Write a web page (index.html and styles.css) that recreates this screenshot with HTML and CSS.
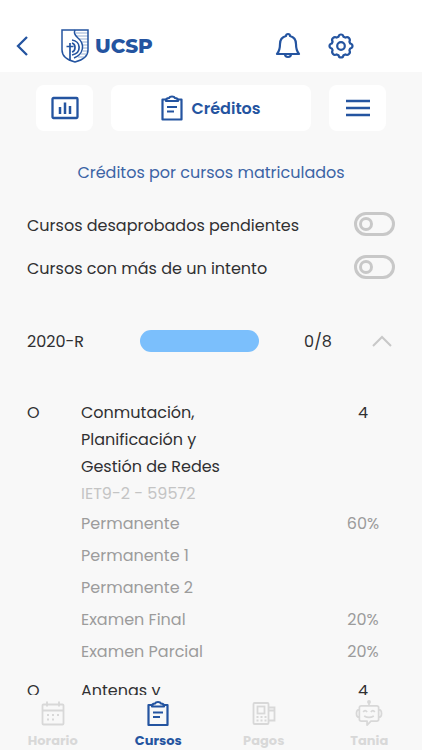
FILE: index.html
```html
<!DOCTYPE html>
<html lang="es">

    <head>
        <meta charset="UTF-8">
        <meta name="viewport" content="width=device-width, initial-scale=1.0">
        <title>UCSP - Créditos</title>
        <link rel="stylesheet" href="styles.css">
    </head>

    <body>

        <header class="topbar">
            <button class="icon-btn back" aria-label="Volver">
                <svg width="12" height="20" viewBox="0 0 12 20" fill="none" stroke="currentColor" stroke-width="2.300"><path d="M11 1 2 10l9 9" /></svg>
            </button>
            <a class="brand" href="#">
                <svg width="28" height="34" viewBox="0 0 28 34" fill="none" stroke="currentColor">
                    <path d="M1 1h26v20c0 6-5 10-13 12C6 31 1 27 1 21z" stroke-width="1.500" />
                    <path d="M14 1c-2 4 1 6 3 8 7 6 6 16-4 20" stroke-width="1.500" />
                    <path d="M11 11c9 1 10 13 0 15M9 14v18M5.500 17.500h7M11 14c4 1 4 8 0 9" stroke-width="1.700" />
                    <path d="M15 4h12M15 7h12M18 10h9M20 13h7M22 16h5M22 19h5M22 22h5M20 25h5M17 28h6" stroke-width="0.8" opacity="0.6" />
                </svg>
                <span>UCSP</span>
            </a>
            <button class="icon-btn" aria-label="Notificaciones">
                <svg width="26" height="28" viewBox="0 0 26 28" fill="none" stroke="currentColor" stroke-width="2.200" stroke-linejoin="round">
                    <path d="M11 4a2 2 0 0 1 4 0c4 1 6 4 6 8 0 5 .5 7 3 10H2c2.500-3 3-5 3-10 0-4 2-7 6-8z" />
                    <path d="M10 22c0 4 6 4 6 0" />
                </svg>
            </button>
            <button class="icon-btn" aria-label="Ajustes">
                <svg width="26" height="26" viewBox="0 0 26 26" fill="none" stroke="currentColor" stroke-width="2.200" stroke-linejoin="round">
                    <path d="M13 1.500c1.800 0 2.200.8 2.500 2.300l1.800.8c1.600-.9 2.500-.9 3.700.4s1.300 2.100.4 3.700l.8 1.800c1.500.3 2.300.7 2.300 2.500s-.8 2.200-2.300 2.500l-.8 1.800c.9 1.600.9 2.500-.4 3.700s-2.100 1.300-3.700.4l-1.800.8c-.3 1.500-.7 2.300-2.500 2.300s-2.200-.8-2.500-2.300l-1.800-.8c-1.600.9-2.500.9-3.700-.4s-1.300-2.100-.4-3.700l-.8-1.800c-1.500-.3-2.300-.7-2.300-2.500s.8-2.200 2.300-2.500l.8-1.800c-.9-1.600-.9-2.500.4-3.700s2.100-1.300 3.700-.4l1.800-.8c.3-1.500.7-2.300 2.500-2.300z" />
                    <circle cx="13" cy="13" r="3.800" />
                </svg>
            </button>
        </header>

        <main class="content">
            <div class="tabs">
                <button class="tab" aria-label="Estadísticas">
                    <svg width="28" height="24" viewBox="0 0 28 24" fill="none" stroke="currentColor" stroke-width="2.300"><rect x="1.500" y="2" width="25" height="20" rx="1" /><path d="M9 18v-7M14 18V6.500M19 18v-8" stroke-width="2.500" /></svg>
                </button>
                <button class="tab tab-main">
                    <svg width="22" height="26" viewBox="0 0 22 26" fill="none" stroke="currentColor" stroke-width="2.200" stroke-linejoin="round"><path d="M6 4.500H1.500v20h19v-20H16" /><path d="M5 6c0-2 1-3 3-3 1-2 5-2 6 0 2 0 3 1 3 3zM6 12h10M6 16.500h7" /></svg>
                    Créditos
                </button>
                <button class="tab" aria-label="Menú">
                    <svg width="24" height="18" viewBox="0 0 24 18" fill="none" stroke="currentColor" stroke-width="2.400"><path d="M0 2h24M0 9h24M0 16h24" /></svg>
                </button>
            </div>

            <h1>Créditos por cursos matriculados</h1>

            <div class="filters">
                <label class="filter">Cursos desaprobados pendientes <input type="checkbox" class="switch"></label>
                <label class="filter">Cursos con más de un intento <input type="checkbox" class="switch"></label>
            </div>

            <details class="period" open>
                <summary>
                    <span class="period-name">2020-R</span>
                    <span class="bar"></span>
                    <span class="count">0/8</span>
                    <svg width="20" height="12" viewBox="0 0 20 12" fill="none" stroke="currentColor" stroke-width="2"><path d="m1 11 9-9 9 9" /></svg>
                </summary>
                <table class="courses">
                    <tbody>
                        <tr class="course">
                            <td class="type">O</td>
                            <th scope="row">Conmutación, Planificación y Gestión de Redes <span class="code">IET9-2 - 59572</span></th>
                            <td class="value">4</td>
                        </tr>
                        <tr class="grade"><td></td><td>Permanente</td><td class="value">60%</td></tr>
                        <tr class="grade"><td></td><td>Permanente 1</td><td></td></tr>
                        <tr class="grade"><td></td><td>Permanente 2</td><td></td></tr>
                        <tr class="grade"><td></td><td>Examen Final</td><td class="value">20%</td></tr>
                        <tr class="grade"><td></td><td>Examen Parcial</td><td class="value">20%</td></tr>
                    </tbody>
                    <tbody>
                        <tr class="course">
                            <td class="type">O</td>
                            <th scope="row">Antenas y</th>
                            <td class="value">4</td>
                        </tr>
                    </tbody>
                </table>
            </details>
        </main>

        <nav class="bottom-nav">
            <a href="#">
                <svg width="24" height="24" viewBox="0 0 24 24" fill="none" stroke="currentColor" stroke-width="1.800"><rect x="1.500" y="3" width="21" height="20" rx="1" /><path d="M1.500 9h21M6 0v5M18 0v5" /><path d="M6 13.500h12M6 18h8" stroke-width="2" stroke-dasharray="2 3" /></svg>
                Horario
            </a>
            <a href="#" class="active">
                <svg width="22" height="26" viewBox="0 0 22 26" fill="none" stroke="currentColor" stroke-width="2.200" stroke-linejoin="round"><path d="M6 4.500H1.500v20h19v-20H16" /><path d="M5 6c0-2 1-3 3-3 1-2 5-2 6 0 2 0 3 1 3 3zM6 12h10M6 16.500h7" /></svg>
                Cursos
            </a>
            <a href="#">
                <svg width="24" height="24" viewBox="0 0 24 24" fill="none" stroke="currentColor" stroke-width="1.800"><rect x="1.500" y="1.500" width="15" height="21" rx="1" /><rect x="5.500" y="5" width="7" height="7" /><path d="M16.500 6h6v13h-6M16.500 9h6" /><path d="M4.500 15.500h10M4.500 19h10" stroke-width="2" stroke-dasharray="2 2" /></svg>
                Pagos
            </a>
            <a href="#">
                <svg width="28" height="28" viewBox="0 0 28 28" fill="none" stroke="currentColor" stroke-width="1.800" stroke-linejoin="round"><path d="M6 6h16q2 0 2 2v12q0 2-2 2h-6l-4 4v-4H6q-2 0-2-2V8q0-2 2-2zM14 3v3M4 10q-3 0-3 4t3 4M24 10q3 0 3 4t-3 4" /><circle cx="14" cy="2" r="2" fill="currentColor" stroke="none" /><path d="M8 12.500q2-3 4 0M16 12.500q2-3 4 0M9 16.500q5 3 10 0" /></svg>
                Tania
            </a>
        </nav>

    </body>

</html>
```
FILE: styles.css
```css
*,
*::before {
    box-sizing: border-box;
}

body {
    margin: 0;
    height: 100vh;
    display: flex;
    flex-direction: column;
    font-family: Poppins, Inter, sans-serif;
    font-size: 16px;
    line-height: 27px;
    color: #303032;
    background-color: #f8f8f8;
}

button {
    font: inherit;
    color: inherit;
    border: none;
    background: none;
    padding: 0;
    cursor: pointer;
}

svg {
    display: block;
    flex: none;
}

a {
    color: inherit;
    text-decoration: none;
}

.topbar {
    display: flex;
    align-items: center;
    padding: 20px 68px 0 16px;
    height: 72px;
    flex: none;
    gap: 27px;
    background-color: #fff;
    color: #2454a0;
}

.brand {
    display: flex;
    align-items: center;
    gap: 6px;
    margin: 0 auto 0 6px;
    font-family: Montserrat, Inter, sans-serif;
    font-size: 20px;
    font-weight: 800;
}

.content {
    flex: 1;
    min-height: 0;
    overflow-y: auto;
    scrollbar-width: none;
}

.tabs {
    display: flex;
    gap: 18px;
    padding: 13px 36px 0;
    color: #2454a0;
}

.tab {
    display: flex;
    align-items: center;
    justify-content: center;
    gap: 8px;
    width: 57px;
    height: 46px;
    border-radius: 8px;
    background-color: #fff;
}

.tab-main {
    flex: 1;
    font-weight: 600;
}

h1 {
    margin: 28px 0 26px;
    font-size: 16px;
    font-weight: 400;
    text-align: center;
    color: #3c64a5;
}

.filters,
.period {
    padding: 0 27px;
}

.filter {
    display: flex;
    align-items: flex-start;
    justify-content: space-between;
    height: 43px;
}

.switch {
    appearance: none;
    display: flex;
    align-items: center;
    width: 41px;
    height: 24px;
    margin: 0;
    padding: 2px;
    border: 3px solid #c8c8c8;
    border-radius: 12px;
}

.switch::before {
    content: "";
    width: 14px;
    height: 14px;
    border: 3px solid #c8c8c8;
    border-radius: 50%;
}

.switch:checked {
    justify-content: flex-end;
}

.period {
    margin-top: 16px;
}

summary {
    display: flex;
    align-items: center;
    height: 54px;
    padding-right: 3px;
    cursor: pointer;
}

summary svg {
    color: #c8c8c8;
}

.period-name {
    width: 113px;
}

.bar {
    flex: 1;
    height: 22px;
    border-radius: 11px;
    background-color: #7bbffc;
}

.count {
    width: 113px;
    padding-left: 5px;
    text-align: center;
}

.courses {
    width: 100%;
    margin-top: 31px;
    border-collapse: collapse;
    table-layout: fixed;
}

.courses td,
.courses th {
    padding: 0;
    text-align: left;
    vertical-align: top;
    font-weight: 400;
}

.courses .type {
    width: 54px;
}

.course .value {
    width: 64px;
}

.courses .value {
    text-align: center;
}

.courses th {
    padding-right: 90px;
}

.code {
    display: block;
    color: #c4c4c4;
    white-space: nowrap;
}

.courses .grade td {
    height: 32px;
    vertical-align: middle;
    color: #9c9c9c;
}

tbody + tbody .course td,
tbody + tbody .course th {
    padding-top: 10px;
}

.bottom-nav {
    display: flex;
    flex: none;
    height: 55px;
    color: #d8d8d8;
    font-size: 13px;
    font-weight: 700;
    line-height: 18px;
}

.bottom-nav a {
    flex: 1;
    display: flex;
    flex-direction: column;
    align-items: center;
    justify-content: space-between;
    padding-top: 5px;
}

.bottom-nav svg {
    height: 27px;
}

.bottom-nav .active {
    color: #2454a0;
}
```
